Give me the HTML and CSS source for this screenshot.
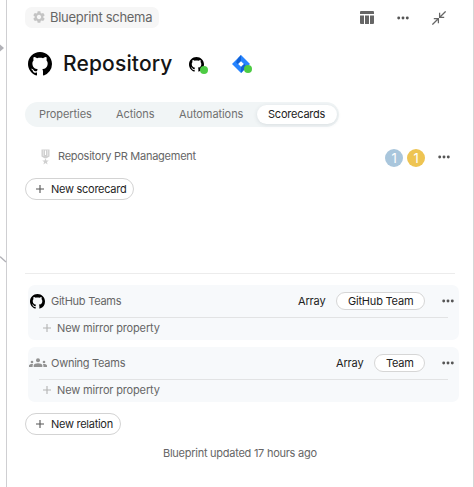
FILE: index.html
```
<!DOCTYPE html>
<html lang="en">
<head>
<meta charset="utf-8">
<title>Blueprint schema</title>
<link rel="stylesheet" href="styles.css">
</head>
<body>
<svg class="defs" width="0" height="0">
  <symbol id="github" viewBox="0 0 16 16"><path d="M8 0C3.58 0 0 3.58 0 8c0 3.54 2.29 6.53 5.47 7.59.4.07.55-.17.55-.38 0-.19-.01-.82-.01-1.49-2.01.37-2.53-.49-2.69-.94-.09-.23-.48-.94-.82-1.13-.28-.15-.68-.52-.01-.53.63-.01 1.08.58 1.23.82.72 1.21 1.87.87 2.33.66.07-.52.28-.87.51-1.07-1.78-.2-3.64-.89-3.64-3.95 0-.87.31-1.59.82-2.15-.08-.2-.36-1.02.08-2.12 0 0 .67-.21 2.2.82.64-.18 1.32-.27 2-.27.68 0 1.36.09 2 .27 1.53-1.04 2.2-.82 2.2-.82.44 1.1.16 1.92.08 2.12.51.56.82 1.27.82 2.15 0 3.07-1.87 3.75-3.65 3.95.29.25.54.73.54 1.48 0 1.07-.01 1.93-.01 2.2 0 .21.15.46.55.38A8.013 8.013 0 0016 8c0-4.42-3.58-8-8-8z"/></symbol>
  <symbol id="dots" viewBox="0 0 12 4"><circle cx="1.7" cy="2" r="1.45"/><circle cx="6" cy="2" r="1.45"/><circle cx="10.3" cy="2" r="1.45"/></symbol>
  <symbol id="plus" viewBox="0 0 8 8"><path d="M4 0v8M0 4h8" fill="none" stroke="currentColor" stroke-width="1.1"/></symbol>
</svg>
<svg class="edges" width="7" height="487" viewBox="0 0 7 487"><path d="M0 44.5l4 3.5-4 3.5z" fill="#b1b1b7"/><path d="M0 256.5l6 5.5" stroke="#b1b1b7" stroke-width="1.3"/></svg>
<main class="panel">
  <header class="top">
    <div class="chip">
      <svg width="12" height="12" viewBox="2 2 20 20" fill="#c4c4c4"><path d="M19.14 12.94c.04-.3.06-.61.06-.94 0-.32-.02-.64-.07-.94l2.03-1.58c.18-.14.23-.41.12-.61l-1.92-3.32c-.12-.22-.37-.29-.59-.22l-2.39.96c-.5-.38-1.03-.7-1.62-.94l-.36-2.54c-.04-.24-.24-.41-.48-.41h-3.84c-.24 0-.43.17-.47.41l-.36 2.54c-.59.24-1.13.57-1.62.94l-2.39-.96c-.22-.08-.47 0-.59.22L2.74 8.87c-.12.21-.08.47.12.61l2.03 1.58c-.05.3-.09.63-.09.94s.02.64.07.94l-2.03 1.58c-.18.14-.23.41-.12.61l1.92 3.32c.12.22.37.29.59.22l2.39-.96c.5.38 1.03.7 1.62.94l.36 2.54c.05.24.24.41.48.41h3.84c.24 0 .44-.17.47-.41l.36-2.54c.59-.24 1.13-.56 1.62-.94l2.39.96c.22.08.47 0 .59-.22l1.92-3.32c.12-.22.07-.47-.12-.61l-2.01-1.58zM12 15.6c-1.98 0-3.6-1.62-3.6-3.6s1.62-3.6 3.6-3.6 3.6 1.62 3.6 3.6-1.62 3.6-3.6 3.6z"/></svg>
      <span>Blueprint schema</span>
    </div>
    <div class="tools">
      <svg width="14" height="13" viewBox="0 0 14 13"><path d="M1 0h12a1 1 0 0 1 1 1v2H0V1a1 1 0 0 1 1-1zM0 4.500h4V13H1a1 1 0 0 1-1-1zM5 4.500h4V13H5zM10 4.500h4V12a1 1 0 0 1-1 1h-3z"/></svg>
      <svg class="dots"><use href="#dots"/></svg>
      <svg width="14" height="14" viewBox="0 0 14 14" fill="none" stroke="#666" stroke-width="1.25"><path d="M13.6.4L8 6M7.6 1.8v4.6h4.6M.4 13.6L6 8M1.8 7.6h4.6v4.6"/></svg>
    </div>
  </header>
  <section class="title">
    <svg width="24" height="24"><use href="#github"/></svg>
    <h1>Repository</h1>
    <span class="source"><svg width="15" height="15"><use href="#github"/></svg><i></i></span>
    <span class="source jira"><svg width="18" height="18" viewBox="0 0 18 18"><path d="M9 0l9 9-9 9-9-9z" fill="#2684ff"/><path d="M9 0v6L5.8 9.2 4.4 7.6C4 5.6 6 3 9 0z" fill="#1262d6"/><path d="M9 18v-6l3.2-3.2 1.4 1.6C14 12.400 12 15 9 18z" fill="#1262d6"/><path d="M9 6.200L11.800 9 9 11.800 6.200 9z" fill="#fff"/></svg><i></i></span>
  </section>
  <nav class="tabs"><a class="t1">Properties</a><a class="t2">Actions</a><a class="t3">Automations</a><a class="active">Scorecards</a></nav>
  <section class="scorecards">
    <div class="score">
      <svg width="9" height="16" viewBox="0 0 9 16"><path d="M.5 .5h8v7L5.500 9.300h-2L.5 7.500z" fill="#d0d0d0"/><path d="M2.300 1v6M6.700 1v6" stroke="#f1f1f1" stroke-width=".7"/><path d="M4.500 1.500V6" stroke="#fff"/><path d="M4.500 9.300l.9 2.200h2.400L5.900 13l.7 2.400-2.100-1.400-2.100 1.400.7-2.400-1.900-1.500h2.400z" fill="#d0d0d0"/></svg>
      <span class="name">Repository PR Management</span>
      <b class="blue">1</b><b class="gold">1</b>
      <svg class="dots"><use href="#dots"/></svg>
    </div>
    <button class="new-score"><svg class="plus"><use href="#plus"/></svg><span>New scorecard</span></button>
  </section>
  <section class="relations">
    <article class="card">
      <div class="rel">
        <svg class="mark" width="15" height="15"><use href="#github"/></svg><span class="name">GitHub Teams</span><span class="type">Array</span><span class="pill wide"><span>GitHub Team</span></span><svg class="dots"><use href="#dots"/></svg>
      </div>
      <div class="mirror"><svg class="plus"><use href="#plus"/></svg><span>New mirror property</span></div>
    </article>
    <article class="card">
      <div class="rel">
        <svg class="people" width="18" height="10" viewBox="0 0 18 10"><circle cx="9" cy="2.200" r="2"/><path d="M4.700 9V7.600C4.700 5.900 7 5.200 9 5.200s4.300.7 4.300 2.400V9z"/><circle cx="3" cy="4" r="1.300"/><circle cx="15" cy="4" r="1.300"/><path d="M0 9V7.500C0 6.400 2 5.700 4.200 6c-.4.500-.6 1-.6 1.700V9zM18 9V7.500c0-1.100-2-1.800-4.200-1.500.4.500.6 1 .6 1.700V9z"/></svg><span class="name">Owning Teams</span><span class="type">Array</span><span class="pill"><span>Team</span></span><svg class="dots"><use href="#dots"/></svg>
      </div>
      <div class="mirror"><svg class="plus"><use href="#plus"/></svg><span>New mirror property</span></div>
    </article>
    <button class="new-rel"><svg class="plus"><use href="#plus"/></svg><span>New relation</span></button>
  </section>
  <footer><span>Blueprint updated 17 hours ago</span></footer>
</main>
</body>
</html>
```
FILE: styles.css
```
* { box-sizing: border-box; }
body { margin: 0; background: #fff; font: 11px/16px Inter, sans-serif; letter-spacing: -.26px; color: #666; overflow: hidden; }
svg { flex: none; display: block; }
.defs, .edges { position: absolute; left: 0; top: 0; }
.panel { height: 487px; margin-left: 6px; border-left: 1px solid #cfcfd2; border-right: 1px solid #d6d6d6; padding: 7px 14px 0 18px; white-space: nowrap; }
.top { display: flex; justify-content: space-between; height: 21px; }
.chip { display: flex; align-items: center; gap: 5px; width: 134px; padding: 0 0 1px 8px; background: #f6f6f6; border-radius: 7px; font-size: 13px; letter-spacing: -.3px; }
.tools { display: flex; align-items: center; gap: 23px; padding-right: 13px; fill: #666; }
.dots { width: 12px; height: 4px; fill: #555; }
.title { display: flex; align-items: center; height: 40px; margin-top: 16px; padding-left: 3px; fill: #000; }
h1 { width: 126px; margin: 0 0 0 11px; font: 500 21px/30px Inter, sans-serif; letter-spacing: .15px; color: #151515; }
.source { position: relative; width: 43px; }
.source i { position: absolute; left: 11px; bottom: -2px; width: 8px; height: 8px; border-radius: 50%; background: #4dcb44; }
.jira i { left: 12px; bottom: 0; }
.tabs { display: flex; align-items: center; width: 314px; height: 25px; margin-top: 18px; padding: 0 0 1px 14px; background: #f1f5f6; border-radius: 13px; letter-spacing: -.08px; color: #707070; }
.t1 { width: 77px; }
.t2 { width: 63px; }
.t3 { width: 78px; }
.tabs .active { height: 19px; width: 80px; line-height: 19px; padding-left: 11px; background: #fff; border-radius: 10px; letter-spacing: -.22px; color: #222; box-shadow: 0 1px 4px rgba(40, 60, 70, .12); }
.scorecards { height: 147px; margin-right: 4px; padding-top: 20px; border-bottom: 1px solid #ececec; }
.score { display: flex; align-items: center; height: 20px; padding-left: 16px; }
.score .name { width: 335px; padding-left: 8px; margin-top: -2px; }
.score b { width: 18px; height: 18px; margin: 1px 4px 0 0; border-radius: 50%; color: #fff; font: 13px/18px Inter, sans-serif; text-align: center; }
.score .dots { margin-left: 9px; }
.blue { background: #a9c6dc; }
.gold { background: #eec452; }
button { display: flex; align-items: center; height: 22px; padding: 0 0 0 10px; border: 1px solid #d3d3d3; border-radius: 11px; background: #fff; font: 11px/16px Inter, sans-serif; letter-spacing: -.27px; color: #1f1f1f; }
.plus { width: 8px; height: 8px; margin-right: 7px; color: #555; }
.new-score { width: 109px; margin-top: 11px; }
.card { width: 431px; height: 55px; margin-left: 3px; background: #f7f9fb; border-radius: 7px; }
.relations { padding-top: 11px; }
.card + .card { margin-top: 7px; }
.rel { display: flex; align-items: center; height: 32px; padding: 0 5px 0 2px; }
.mark { fill: #000; }
.people { margin-left: -1px; fill: #929292; }
.rel .name { margin-right: auto; padding-left: 6px; }
.rel .people + .name { padding-left: 4px; }
.type { width: 38px; letter-spacing: -.15px; color: #222; }
.pill { width: 51px; height: 18px; margin-right: 17px; padding-left: 11px; border: 1px solid #d6d6d6; border-radius: 9px; background: #fff; line-height: 16px; letter-spacing: -.2px; color: #222; }
.pill.wide { width: 89px; }
.mirror { display: flex; align-items: center; height: 22px; margin: 0 11px; padding: 0 0 1px 4px; border-top: 1px solid #e2e3e4; letter-spacing: -.16px; }
.mirror .plus { margin-right: 6px; color: #b3b3b3; }
.new-rel { width: 96px; margin-top: 11px; }
footer { display: flex; margin-top: 10px; padding-left: 138px; }
```
